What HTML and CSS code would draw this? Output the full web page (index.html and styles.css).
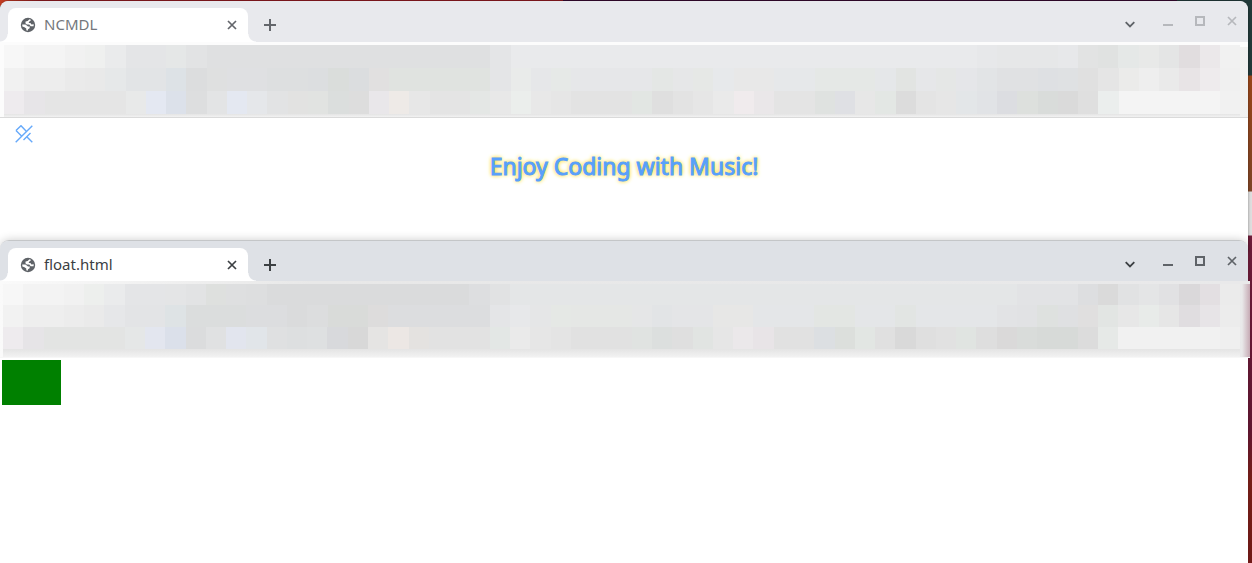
FILE: index.html
```html
<!DOCTYPE html>
<html lang="en">
<head>
<meta charset="utf-8">
<title>Desktop</title>
<link rel="stylesheet" href="styles.css">
</head>
<body>
<svg class="defs" aria-hidden="true">
  <symbol id="globe" viewBox="0 0 16 16"><circle cx="8" cy="8" r="7.2" fill="#5f6368"/><path d="M2.200 7.400H5.500L8 9.400 9.800 9.600 9.600 11.200 8 12.200 7.700 13.700 6.300 13.200V11.500L4.500 10.200 2.400 9.600ZM9.400 2.300 11.200 3 9.400 4.600 8.600 5.900H10.400L11.400 7.600 13.700 7.300 13.600 9.200 10.600 9.300 9.300 7.600H6.800L5.400 6.200 5.600 4.600 7.700 3.900Z" fill="#fff"/></symbol>
  <symbol id="close" viewBox="0 0 10 10"><path d="M1 1 9 9M9 1 1 9" fill="none" stroke="currentColor" stroke-width="1.7"/></symbol>
  <symbol id="plus" viewBox="0 0 12 12"><path d="M6 0V12M0 6H12" fill="none" stroke="currentColor" stroke-width="2"/></symbol>
  <symbol id="chevron" viewBox="0 0 10 10"><path d="M.7 3.2 5 7.5 9.3 3.2" fill="none" stroke="currentColor" stroke-width="1.8"/></symbol>
  <symbol id="min" viewBox="0 0 10 10"><path d="M0 9H10" stroke="currentColor" stroke-width="2"/></symbol>
  <symbol id="max" viewBox="0 0 10 10"><path d="M1 1H9V9H1Z" fill="none" stroke="currentColor" stroke-width="2"/></symbol>
</svg>
<main class="desktop">
  <section class="window window-back">
    <header class="tabstrip">
      <div class="tab">
        <svg class="globe"><use href="#globe"/></svg>
        <span class="title">NCMDL</span>
        <button class="icon-button" aria-label="Close tab"><svg class="icon"><use href="#close"/></svg></button>
      </div>
      <button class="icon-button new-tab" aria-label="New tab"><svg class="plus"><use href="#plus"/></svg></button>
      <div class="controls">
        <button class="icon-button search" aria-label="Search tabs"><svg class="icon"><use href="#chevron"/></svg></button>
        <button class="icon-button" aria-label="Minimize"><svg class="icon"><use href="#min"/></svg></button>
        <button class="icon-button" aria-label="Maximize"><svg class="icon"><use href="#max"/></svg></button>
        <button class="icon-button" aria-label="Close window"><svg class="icon"><use href="#close"/></svg></button>
      </div>
    </header>
    <div class="mosaic" id="mosaic-back"></div>
    <div class="page">
      <svg class="unplug" viewBox="0 0 18 18" role="img" aria-label="Disconnected"><path d="M.7 17.3 17.3.7M1 5.500 6 .7 11 6M1 5.500 6.500 11M11.500 11.500l5.800 5.800M8.500 15 15.500 8" fill="none" stroke="#66a9fa" stroke-width="1.4"/></svg>
      <h1 class="heading">Enjoy Coding with Music!</h1>
    </div>
  </section>
  <section class="window window-front">
    <header class="tabstrip">
      <div class="tab">
        <svg class="globe"><use href="#globe"/></svg>
        <span class="title">float.html</span>
        <button class="icon-button" aria-label="Close tab"><svg class="icon"><use href="#close"/></svg></button>
      </div>
      <button class="icon-button new-tab" aria-label="New tab"><svg class="plus"><use href="#plus"/></svg></button>
      <div class="controls">
        <button class="icon-button search" aria-label="Search tabs"><svg class="icon"><use href="#chevron"/></svg></button>
        <button class="icon-button" aria-label="Minimize"><svg class="icon"><use href="#min"/></svg></button>
        <button class="icon-button" aria-label="Maximize"><svg class="icon"><use href="#max"/></svg></button>
        <button class="icon-button" aria-label="Close window"><svg class="icon"><use href="#close"/></svg></button>
      </div>
    </header>
    <div class="mosaic" id="mosaic-front"></div>
    <div class="page"><div class="box"></div></div>
  </section>
</main>
<script src="mosaic.js"></script>
</body>
</html>
```
FILE: styles.css
```css
* { box-sizing: border-box; }
body { margin: 0; font-family: "Noto Sans", "Open Sans", sans-serif; }
.defs { position: absolute; width: 0; height: 0; }
.desktop {
  display: flex;
  flex-direction: column;
  min-height: 100vh;
  padding: 1px 4px 0 0;
  background:
    linear-gradient(90deg, #c43d22 0, #8c1a20 40px, #8c1a20 45%, #35092f 45%, #35092f 94%, #213939 94%) top / 100% 6px no-repeat,
    linear-gradient(#213939 75px, #984519 76px, #7e4526 191px, #dedede 192px, #dedede 235px, #6f1d3b 236px, #651733 430px, #7d2019 480px, #761b18);
}
.window {
  display: flex;
  flex-direction: column;
  background: #fff;
  border-radius: 9px 9px 0 0;
  box-shadow: 0 0 3px #0006;
}
.window-back { --strip: #e8e9ed; height: 251px; margin-bottom: -12px; color: #63666b; }
.window-front { --strip: #dee1e6; flex: 1; color: #3c4043; border-top: 1px solid #c4c6c8; box-shadow: 0 0 10px #0003; }
.tabstrip {
  display: flex;
  align-items: center;
  height: 41px;
  padding-left: 8px;
  border-radius: 8px 8px 0 0;
  background:
    radial-gradient(circle at 0 0, var(--strip) 7px, #fff 8px) 0 100% / 8px 8px no-repeat,
    radial-gradient(circle at 100% 0, var(--strip) 7px, #fff 8px) 248px 100% / 8px 8px no-repeat,
    var(--strip);
}
.window-front .tabstrip { height: 40px; }
.tab {
  display: flex;
  align-items: center;
  align-self: flex-end;
  width: 240px;
  height: 34px;
  padding: 0 4px 0 12px;
  border-radius: 8px 8px 0 0;
  background: #fff;
}
.window-front .tab { height: 33px; }
.globe { width: 16px; height: 16px; }
.title { flex: 1; margin-left: 8px; padding-bottom: 2px; font-size: 15px; line-height: 20px; }
.window-back .title { color: #74777c; }
.icon-button {
  display: flex;
  align-items: center;
  justify-content: center;
  width: 24px;
  height: 24px;
  padding: 0;
  border: 0;
  background: none;
  color: inherit;
}
.icon { width: 10px; height: 10px; }
.plus { width: 12px; height: 12px; }
.new-tab { align-self: flex-end; margin: 0 0 5px 10px; }
.window-front .new-tab { margin-bottom: 4px; }
.controls { display: flex; align-self: flex-start; margin: 8px 0 0 auto; }
.controls .icon-button { width: 32px; color: #b6b8bc; }
.window-front .controls .icon-button { color: #5f6368; }
.controls .search { margin-right: 6px; padding-top: 6px; }
.window-back .controls .search { color: #5f6368; }
.window-front .controls .search { color: #3c4043; }
.mosaic {
  display: grid;
  grid-template-rows: repeat(3, 23px) 3px;
  height: 76px;
  padding: 3px 8px 0 4px;
  border-bottom: 1px solid #dadada;
  background: linear-gradient(90deg, #fff0 90%, #f1f1f0) 0 5px no-repeat, #fcfcfc;
}
#mosaic-front {
  grid-template-rows: 21px 22px 22px 8px;
  height: 77px;
  margin-right: -2px;
  padding: 3px 10px 0 3px;
  border-bottom-color: #f7f7f7;
  background: linear-gradient(90deg, #d8c5cd00, #c6aab4) right bottom / 8px 73px no-repeat, linear-gradient(90deg, #fafafa, #e8e8e8 25%, #e9e9ea);
}
.row { display: flex; }
.fade { background: linear-gradient(#e4e4e4, #f2f2f2); }
.page { flex: 1; }
.unplug { display: block; width: 18px; height: 18px; margin: 7px 0 0 15px; }
.heading {
  margin: 5px 0 0;
  color: #58a0fb;
  font-size: 23px;
  font-weight: 400;
  line-height: 36px;
  text-align: center;
  text-shadow: 0 0 4px #ffd820, 0 0 4px #ffe04a;
  -webkit-text-stroke: 1px #58a0fb;
}
.box { width: 59px; height: 45px; margin: 2px; background: #008000; }
```
FILE: mosaic.js
```js
// Each entry is a colour, optionally followed by the number of cells it covers.
const back = [
  "f7f7f7 f4f4f4*2 f1f1f1 eff0ef eaebec e4e5e7*2 e5e7e7 e2e3e4 dfe0e1*14 e4e5e7 e9eaec*23 e7e8ea e6e7e8*3 e7e8ea e2e3e3 e0e2e1 e5e8e7 e8e9e8 e4e5e5 e1dddf ebe8ea f1f1f1",
  "f1f1f1 ededed*2 eaeaea e9e9e9 e6e8e9 e2e4e6*2 dde2e6 dcddde dfe0e0 dfe0e2*2 dddfe0*2 dcdee0 dadddb dbdddf e1e0e0 e0e3e0*5 e4e5e7 e9ebea e6e7e9 e6e9e7 e6e7e9*4 e4e7e5 e6e7e8 e6e8e6 e7e9eb e8e8e8*2 e6e8ea*2 e5e8e6*3 e5e7e9 e2e4e2 e6e7e9 e5e7e6 e5e6e9 e2e4e6 e0e1e3*2 dee0e3 dfe1e3 e0e0e0 e5e5e5 ebebea eeeeee eaeaea e8e4e6 eeebed f0f0f0",
  "eeebee e7e5e8 e5e5e5*4 e8e9e9 e4e8f2 dce1ea dddedf e3e4e5 e4e8f1 e5e7ea e2e3e4 e2e2e1 e1e3e1 dbdedd dddddd e9e7ea eeeae7 e7e7e7 e4e4e4*2 e4e7e5 e8e8e8 ebeeec e8e8e8 e6e6e6 e3e3e3*3 e2e6e3 dfdfdf e3e3e3 e6e6e6 eaeaea f0ebed eae7e9 e4e4e4*2 dfe2e0 dfe0e4 e7e7e7 e3e7e4 dcdcdc e4e4e4 e6e6e6 e3e6e8 e1e3e6 dcdde1 dde0dd d9dcda dadada dfdfdf ebeeed f4f4f4*5 f1f1f1"
];
const front = [
  "f7f7f7 f3f3f3*2 f1f1f1 edefed eaebec e4e5e7*2 e4e5e6 e2e3e4 dee0de dedfe0 dddedf dadbdc*10 dddee0 e1e2e3 e4e6e7*25 e2e3e5*3 dddee0 dadada e1e2e3 e4e5e6 e1e1e3 dad8da e3dfe2 ebebeb",
  "f2f2f2 eeeeee*2 ececec eaeaea e6e7e9 e3e4e6*2 dee3e5 dbdddd*3 dcdddf*2 dadbdc dcddde d9dbd9*2 dddcdc dcdddf*5 e4e5e7 e7e8ea e5e6e7 e5e8e5 e5e7e5*3 e5e6e7 e2e4e6 e4e5e7*2 e7e7e6*2 e4e6e8*3 e3e6e3*2 e4e6e8*2 e2e5e3 e4e6e8*4 e2e3e5 e1e2e4 dee1df dfe0e2 e0dfdf e2e5e3 e7e7e7 e8ebe9 e6e6e6 e0dde0 e7e4e7 ececec",
  "eeebee e6e4e7 e3e4e3*4 e5e7e7 e3e6ef dbe0ea dbdcdd e0e1e2 e2e5ee e1e5e9 dfe0e1 dddfe0 dee0e1 d8d9dc d8d8d8 e5e4e3 ece7e4 e4e2e0 e2e2e2*3 e3e7e5 eaeaea e6e6e6 e4e4e4 e1e1e1*3 e0e3e1 dcdfde dfdfdf e1e4e2 e6e6e6 ebe8ea e8e4e7 e1e1e1*2 dcdfe2 dcdfdc e2e6e3 e0e0e0 d9d9d9 dfdfdf e1e1e1 e0e4e1 dedede dad9d9 d9dcda d7dad8*2 dcdcdc e6e9e7 f1f1f1*5 efefef"
];

function drawMosaic(id, rows) {
  const root = document.getElementById(id);
  for (const row of rows) {
    const line = document.createElement("div");
    line.className = "row";
    for (const entry of row.split(" ")) {
      const [colour, count = 1] = entry.split("*");
      const cell = document.createElement("i");
      cell.style.flex = count + " 0 0";
      cell.style.background = "#" + colour;
      line.append(cell);
    }
    root.append(line);
  }
  const fade = document.createElement("div");
  fade.className = "fade";
  root.append(fade);
}

drawMosaic("mosaic-back", back);
drawMosaic("mosaic-front", front);
```
